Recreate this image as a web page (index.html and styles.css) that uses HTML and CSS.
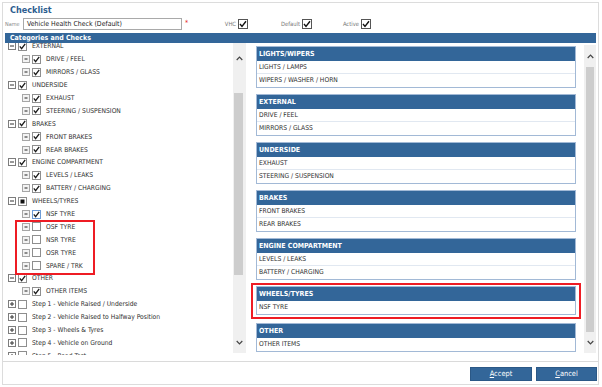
FILE: index.html
```html
<!DOCTYPE html>
<html>
<head>
<meta charset="utf-8">
<link rel="stylesheet" href="styles.css">
</head>
<body>
<div class="dialog">
  <div class="title">Checklist</div>
  <div class="name-row">
    <span class="name-label">Name</span>
    <span class="name-input">Vehicle Health Check (Default)</span>
    <span class="req">*</span>
    <span class="flag flag-vhc"><span class="flag-label">VHC</span><svg class="big-cb" width="10" height="10" viewBox="0 0 10 10"><rect x="0.5" y="0.5" width="9" height="9" fill="#fff" stroke="#555"/><path d="M2 5 L4 7.4 L8 2.2" fill="none" stroke="#111" stroke-width="1.4"/></svg></span>
    <span class="flag flag-default"><span class="flag-label">Default</span><svg class="big-cb" width="10" height="10" viewBox="0 0 10 10"><rect x="0.5" y="0.5" width="9" height="9" fill="#fff" stroke="#555"/><path d="M2 5 L4 7.4 L8 2.2" fill="none" stroke="#111" stroke-width="1.4"/></svg></span>
    <span class="flag flag-active"><span class="flag-label">Active</span><svg class="big-cb" width="10" height="10" viewBox="0 0 10 10"><rect x="0.5" y="0.5" width="9" height="9" fill="#fff" stroke="#555"/><path d="M2 5 L4 7.4 L8 2.2" fill="none" stroke="#111" stroke-width="1.4"/></svg></span>
  </div>
  <div class="bar">Categories and Checks</div>
  <div class="content">
    <div class="left-pane">
      <div class="tree-view">
        <div class="tree" id="tree"></div>
      </div>
      <div class="vscroll left-scroll">
        <div class="arrow arrow-up-l"><svg width="7" height="5" viewBox="0 0 7 5"><path d="M0.7 4 L3.5 1.2 L6.3 4" fill="none" stroke="#444" stroke-width="1.2"/></svg></div>
        <div class="gap-top"></div>
        <div class="thumb thumb-left"></div>
        <div class="fill"></div>
        <div class="arrow arrow-down-l"><svg width="7" height="5" viewBox="0 0 7 5"><path d="M0.7 1 L3.5 3.8 L6.3 1" fill="none" stroke="#444" stroke-width="1.2"/></svg></div>
      </div>
    </div>
    <div class="right-pane">
      <div class="panels">
        <div class="panel">
          <div class="panel-head">LIGHTS/WIPERS</div>
          <div class="panel-row">LIGHTS / LAMPS</div>
          <div class="panel-row">WIPERS / WASHER / HORN</div>
        </div>
        <div class="panel">
          <div class="panel-head">EXTERNAL</div>
          <div class="panel-row">DRIVE / FEEL</div>
          <div class="panel-row">MIRRORS / GLASS</div>
        </div>
        <div class="panel">
          <div class="panel-head">UNDERSIDE</div>
          <div class="panel-row">EXHAUST</div>
          <div class="panel-row">STEERING / SUSPENSION</div>
        </div>
        <div class="panel">
          <div class="panel-head">BRAKES</div>
          <div class="panel-row">FRONT BRAKES</div>
          <div class="panel-row">REAR BRAKES</div>
        </div>
        <div class="panel">
          <div class="panel-head">ENGINE COMPARTMENT</div>
          <div class="panel-row">LEVELS / LEAKS</div>
          <div class="panel-row">BATTERY / CHARGING</div>
        </div>
        <div class="panel panel-marked">
          <div class="panel-head">WHEELS/TYRES</div>
          <div class="panel-row">NSF TYRE</div>
        </div>
        <div class="panel">
          <div class="panel-head">OTHER</div>
          <div class="panel-row">OTHER ITEMS</div>
        </div>
      </div>
      <div class="vscroll right-scroll">
        <div class="arrow arrow-up-r"><svg width="7" height="5" viewBox="0 0 7 5"><path d="M0.7 4 L3.5 1.2 L6.3 4" fill="none" stroke="#444" stroke-width="1.2"/></svg></div>
        <div class="thumb thumb-right"></div>
        <div class="arrow arrow-down-r"><svg width="7" height="5" viewBox="0 0 7 5"><path d="M0.7 1 L3.5 3.8 L6.3 1" fill="none" stroke="#444" stroke-width="1.2"/></svg></div>
      </div>
    </div>
  </div>
  <div class="footer">
    <button class="btn"><u>A</u>ccept</button>
    <button class="btn"><u>C</u>ancel</button>
  </div>
</div>
<script>
(function () {
  var rows = [
    [0, 'minus', 'on', 'EXTERNAL'],
    [1, 'leaf', 'on', 'DRIVE / FEEL'],
    [1, 'leaf', 'on', 'MIRRORS / GLASS'],
    [0, 'minus', 'on', 'UNDERSIDE'],
    [1, 'leaf', 'on', 'EXHAUST'],
    [1, 'leaf', 'on', 'STEERING / SUSPENSION'],
    [0, 'minus', 'on', 'BRAKES'],
    [1, 'leaf', 'on', 'FRONT BRAKES'],
    [1, 'leaf', 'on', 'REAR BRAKES'],
    [0, 'minus', 'on', 'ENGINE COMPARTMENT'],
    [1, 'leaf', 'on', 'LEVELS / LEAKS'],
    [1, 'leaf', 'on', 'BATTERY / CHARGING'],
    [0, 'minus', 'mixed', 'WHEELS/TYRES'],
    [1, 'leaf', 'focus', 'NSF TYRE'],
    ['group'],
    [1, 'leaf', 'off', 'OSF TYRE'],
    [1, 'leaf', 'off', 'NSR TYRE'],
    [1, 'leaf', 'off', 'OSR TYRE'],
    [1, 'leaf', 'off', 'SPARE / TRK'],
    ['endgroup'],
    [0, 'minus', 'on', 'OTHER'],
    [1, 'leaf', 'on', 'OTHER ITEMS'],
    [0, 'plus', 'off', 'Step 1 - Vehicle Raised / Underside'],
    [0, 'plus', 'off', 'Step 2 - Vehicle Raised to Halfway Position'],
    [0, 'plus', 'off', 'Step 3 - Wheels & Tyres'],
    [0, 'plus', 'off', 'Step 4 - Vehicle on Ground'],
    [0, 'plus', 'off', 'Step 5 - Road Test']
  ];
  var exp = {
    minus: '<svg width="8" height="8" viewBox="0 0 8 8"><rect x="0.5" y="0.5" width="7" height="7" fill="#fff" stroke="#7d7d7d"/><path d="M2 4 H6" stroke="#333" stroke-width="1"/></svg>',
    plus: '<svg width="8" height="8" viewBox="0 0 8 8"><rect x="0.5" y="0.5" width="7" height="7" fill="#fff" stroke="#7d7d7d"/><path d="M2 4 H6 M4 2 V6" stroke="#333" stroke-width="1"/></svg>',
    leaf: '<svg width="8" height="8" viewBox="0 0 8 8"><rect x="0.5" y="0.5" width="7" height="7" fill="#f3f3f3" stroke="#a6a6a6"/><rect x="2.5" y="3" width="3" height="2" fill="#8a8a8a"/></svg>'
  };
  var cb = {
    on: '<svg width="9" height="9" viewBox="0 0 9 9"><rect x="0.5" y="0.5" width="8" height="8" fill="#fff" stroke="#8e8e8e"/><path d="M1.8 4.4 L3.6 6.6 L7.2 1.8" fill="none" stroke="#1a1a1a" stroke-width="1.3"/></svg>',
    focus: '<svg width="9" height="9" viewBox="0 0 9 9"><rect x="0.5" y="0.5" width="8" height="8" fill="#fff" stroke="#6d9bd6"/><path d="M1.8 4.4 L3.6 6.6 L7.2 1.8" fill="none" stroke="#1a1a1a" stroke-width="1.3"/></svg>',
    off: '<svg width="9" height="9" viewBox="0 0 9 9"><rect x="0.5" y="0.5" width="8" height="8" fill="#fff" stroke="#8e8e8e"/></svg>',
    mixed: '<svg width="9" height="9" viewBox="0 0 9 9"><rect x="0.5" y="0.5" width="8" height="8" fill="#fff" stroke="#8e8e8e"/><rect x="2.5" y="2.5" width="4" height="4" fill="#111"/></svg>'
  };
  var tree = document.getElementById('tree');
  var target = tree;
  rows.forEach(function (r) {
    if (r[0] === 'group') {
      var g = document.createElement('div');
      g.className = 'tree-group marked';
      tree.appendChild(g);
      target = g;
      return;
    }
    if (r[0] === 'endgroup') { target = tree; return; }
    var row = document.createElement('div');
    row.className = 'tree-row level' + r[0];
    var e = document.createElement('span');
    e.className = 'exp';
    e.innerHTML = exp[r[1]];
    var c = document.createElement('span');
    c.className = 'cb';
    c.innerHTML = cb[r[2]];
    var t = document.createElement('span');
    t.className = 'label';
    t.textContent = r[3];
    row.appendChild(e); row.appendChild(c); row.appendChild(t);
    target.appendChild(row);
  });
})();
</script>
</body>
</html>
```

FILE: styles.css
```css
* { box-sizing: border-box; }
html, body { margin: 0; padding: 0; background: #fff; }
body {
  font-family: "DejaVu Sans Condensed", "DejaVu Sans", sans-serif;
  font-stretch: condensed;
  color: #333;
}
.dialog {
  margin: 2px 0 0 2px;
  width: 597px;
  height: 383px;
  border: 1px solid #dcdcdc;
  display: flex;
  flex-direction: column;
}
.title {
  height: 14px;
  padding: 1px 0 0 7px;
  font-size: 9px;
  line-height: 12px;
  font-weight: bold;
  color: #2d5e90;
}
.name-row {
  height: 13px;
  display: flex;
  align-items: center;
}
.name-label {
  width: 20px;
  padding-left: 2px;
  font-size: 5.5px;
  color: #8a8a8a;
}
.name-input {
  width: 159px;
  height: 12px;
  border: 1px solid #a9a9a9;
  font-size: 6.9px;
  line-height: 10px;
  padding-left: 3px;
  color: #222;
}
.req {
  color: #e52222;
  font-size: 7px;
  margin-left: 3px;
  width: 5px;
  align-self: flex-start;
  margin-top: 2px;
}
.flag {
  display: flex;
  align-items: center;
  justify-content: flex-end;
  gap: 2px;
}
.flag-vhc { width: 58px; }
.flag-default { width: 64px; }
.flag-active { width: 59px; }
.flag-label {
  font-size: 5.8px;
  color: #777;
}
.big-cb { display: block; }
.bar {
  height: 10px;
  margin: 3px 2px 0 2px;
  background: #336699;
  color: #fff;
  font-size: 7px;
  line-height: 10px;
  font-weight: bold;
  padding-left: 5px;
}
.content {
  height: 318px;
  display: flex;
}
.left-pane {
  width: 241px;
  margin-left: 2px;
  display: flex;
  align-items: flex-start;
}
.tree-view {
  flex: 1;
  height: 312px;
  overflow: hidden;
}
.tree { margin-top: -3px; }
.tree-row {
  height: 12.9px;
  display: flex;
  align-items: center;
  font-size: 6.7px;
  color: #2e2e2e;
  white-space: nowrap;
}
.tree-row.level0 { padding-left: 3px; }
.tree-row.level1 { padding-left: 17px; }
.exp, .cb { display: flex; }
.exp { width: 8px; margin-right: 2px; }
.cb { width: 9px; margin-right: 5px; }
.tree-group { position: relative; }
.tree-group.marked::after {
  content: "";
  position: absolute;
  left: 10px;
  top: 0;
  width: 76px;
  height: 51px;
  border: 2px solid #ee1c24;
}
.vscroll {
  background: #f0f0f0;
  display: flex;
  flex-direction: column;
}
.left-scroll { width: 13px; height: 310px; }
.arrow {
  display: flex;
  align-items: center;
  justify-content: center;
}
.arrow-up-l { height: 30px; }
.gap-top { height: 20px; }
.thumb-left { height: 182px; margin: 0 3px 0 1px; background: #cdcdcd; }
.fill { flex: 1; }
.arrow-down-l { height: 22px; }
.right-pane {
  margin-left: 4px;
  flex: 1;
  height: 310px;
  display: flex;
}
.panels {
  width: 326px;
  padding: 3px 0 0 6px;
}
.panel {
  border: 1px solid #a2b9d6;
  margin-bottom: 6px;
  background: #fff;
}
.panel-marked {
  position: relative;
  margin-bottom: 8px;
}
.panel-marked::after {
  content: "";
  position: absolute;
  left: -6px;
  right: -6px;
  top: -4px;
  bottom: -5px;
  border: 2px solid #ee1c24;
}
.panel-head {
  height: 14px;
  background: #336699;
  color: #fff;
  font-weight: bold;
  font-size: 7px;
  line-height: 14px;
  padding-left: 2px;
}
.panel-row {
  height: 13px;
  font-size: 6.7px;
  line-height: 12px;
  padding-left: 2px;
  color: #2e2e2e;
  border-bottom: 1px solid #e1e8f1;
}
.panel-row:last-child { border-bottom: none; }
.right-scroll {
  width: 12px;
  margin: 2px 0 0 8px;
  height: 308px;
}
.arrow-up-r { height: 22px; }
.thumb-right { height: 265px; margin: 0 2px; background: #cdcdcd; }
.arrow-down-r { height: 21px; }
.footer {
  height: 23px;
  border-top: 1px solid #dadada;
  display: flex;
  justify-content: flex-end;
  align-items: flex-start;
  gap: 4px;
  padding: 5px 1px 0 0;
}
.btn {
  height: 14px;
  background: #336699;
  border: 1px solid #2b5886;
  color: #fff;
  font-family: "DejaVu Sans Condensed", "DejaVu Sans", sans-serif;
  font-stretch: condensed;
  font-size: 7.4px;
  line-height: 12px;
  padding: 0;
}
.btn:first-child { width: 62px; }
.btn:last-child { width: 61px; }
```
